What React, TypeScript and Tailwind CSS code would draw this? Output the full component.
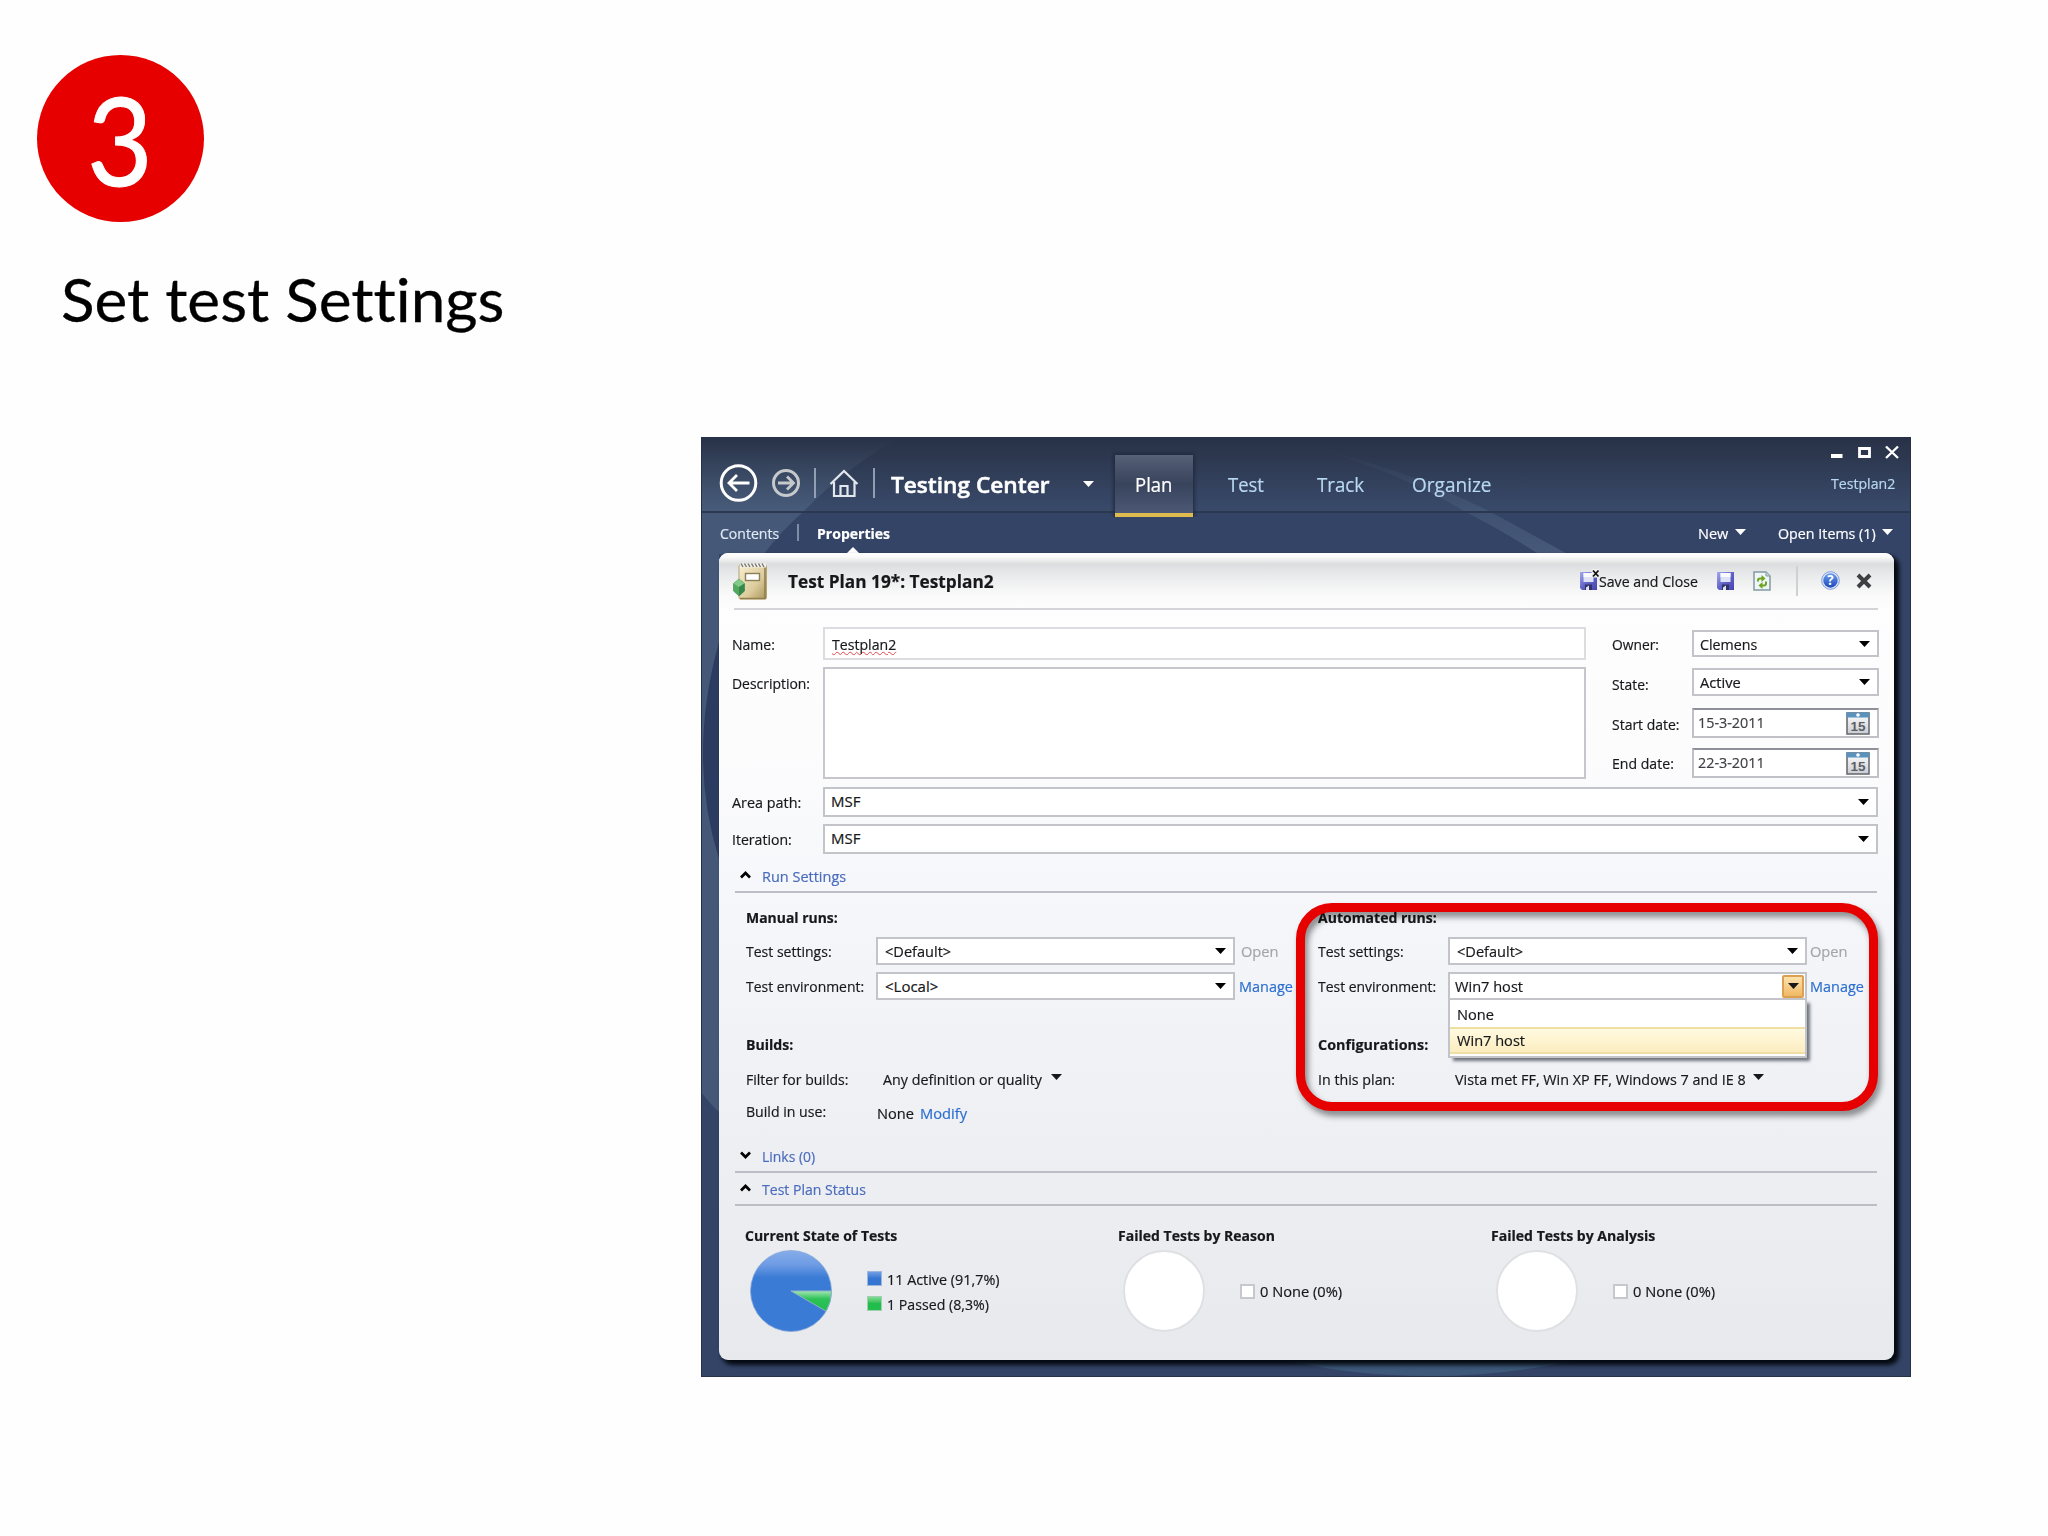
import React, { useLayoutEffect, useRef, useState } from "react";

type Box = { className?: string; children?: React.ReactNode };

/* A single line of text condensed or widened to fill the width of its box. */
function T({ className = "", children }: Box) {
  const box = useRef<HTMLSpanElement>(null);
  const inner = useRef<HTMLSpanElement>(null);
  const [scale, setScale] = useState(1);
  useLayoutEffect(() => {
    if (box.current && inner.current && inner.current.offsetWidth > 0) {
      setScale(box.current.getBoundingClientRect().width / inner.current.offsetWidth);
    }
  }, []);
  return (
    <span ref={box} className={`block shrink-0 whitespace-nowrap ${className}`}>
      <span ref={inner} className="inline-block origin-left" style={{ transform: `scaleX(${scale})` }}>
        {children}
      </span>
    </span>
  );
}

function Caret({ className = "" }: { className?: string }) {
  return (
    <svg viewBox="0 0 11 6" className={`h-[6px] w-[11px] shrink-0 ${className}`}>
      <path d="M0 0H11L5.5 6Z" fill="currentColor" />
    </svg>
  );
}

function Select({ className = "", children }: Box) {
  return (
    <div className={`flex shrink-0 items-center justify-between border-2 border-[#c3c4c9] bg-white pr-[7px] ${className}`}>
      {children}
      <Caret className="text-black" />
    </div>
  );
}

function Calendar() {
  return (
    <svg viewBox="0 0 24 23" className="h-[23px] w-[24px]">
      <defs>
        <linearGradient id="calPage" x1="0" y1="0" x2="0" y2="1">
          <stop offset="0" stopColor="#ffffff" />
          <stop offset="1" stopColor="#c9ccd2" />
        </linearGradient>
      </defs>
      <rect x="1" y="1" width="22" height="21" fill="url(#calPage)" stroke="#6a6d74" strokeWidth="1.6" />
      <rect x="0.5" y="0.5" width="23" height="5" fill="#5b93bd" />
      <circle cx="12" cy="3" r="1.8" fill="#fff" />
      <text x="12" y="19" textAnchor="middle" fontSize="12.5" fontWeight="700" fontFamily="Liberation Sans, sans-serif" fill="#5c5f66" textLength="15" lengthAdjust="spacingAndGlyphs">15</text>
    </svg>
  );
}

function DateBox({ className = "", children }: Box) {
  return (
    <div className={`flex h-[30px] w-[187px] items-center justify-between border-2 border-[#bfc1c7] border-t-[#8e9197] bg-white pl-[4px] pr-[7px] text-[#3f4045] ${className}`}>
      {children}
      <Calendar />
    </div>
  );
}

function Chevron({ down = false }: { down?: boolean }) {
  return (
    <svg viewBox="0 0 11 8" className="mb-[2px] h-[8px] w-[11px] shrink-0">
      <path d={down ? "M1 1.5L5.5 6L10 1.5" : "M1 6.5L5.5 2L10 6.5"} fill="none" stroke="#000" strokeWidth="2.7" />
    </svg>
  );
}

function Floppy({ close = false }: { close?: boolean }) {
  return (
    <svg viewBox="0 0 20 21" className="h-[21px] w-[20px] shrink-0 overflow-visible">
      <defs>
        <linearGradient id="floppy" x1="0" y1="0" x2="1" y2="1">
          <stop offset="0" stopColor="#a6a9ec" />
          <stop offset="0.5" stopColor="#6163c8" />
          <stop offset="1" stopColor="#4644ae" />
        </linearGradient>
      </defs>
      <path d="M1 2H18V20H3L1 18Z" fill="url(#floppy)" />
      <path d="M4.500 3H14.500V12H4.500Z" fill="#dde2f7" />
      <path d="M4.500 3H14.500V7H4.500Z" fill="#fafbff" />
      <path d="M6 14.500H13V20H6Z" fill="#303268" />
      <path d="M7 20V17.500L10 15.500V20Z" fill="#dfe3f3" />
      {close && (
        <>
          <rect x="12.500" y="-1" width="8" height="8.500" fill="#f0f0f2" />
          <path d="M14 0.500L19.500 6.500M19.500 0.500L14 6.500" stroke="#111" strokeWidth="1.800" />
        </>
      )}
    </svg>
  );
}

function PlanIcon() {
  return (
    <svg viewBox="0 0 35 38" className="h-[38px] w-[35px] shrink-0">
      <defs>
        <linearGradient id="pad" x1="0" y1="0" x2="1" y2="1">
          <stop offset="0" stopColor="#f8f0d2" />
          <stop offset="0.6" stopColor="#dccc9c" />
          <stop offset="1" stopColor="#a8935a" />
        </linearGradient>
      </defs>
      <rect x="6" y="3" width="27.5" height="34" rx="1.5" fill="url(#pad)" stroke="#b5a474" strokeWidth="1" />
      <path d="M32 4V36.500H7" fill="none" stroke="#92804c" strokeWidth="1.600" />
      <path d="M7 3.500H33" stroke="#f4f2ea" strokeWidth="4" />
      <path d="M8 1.500L10 5M11.500 1.500L13.500 5M15 1.500L17 5M18.500 1.500L20.500 5M22 1.500L24 5M25.500 1.500L27.500 5M29 1.500L31 5" stroke="#7b7a76" strokeWidth="1.500" />
      <rect x="12.500" y="11.500" width="14" height="7" fill="#fff" stroke="#8b7f58" strokeWidth="1.400" />
      <path d="M6 17L11.500 21.500V29L6 34L0.500 29V21.500Z" fill="#52a85f" stroke="#3d8a4b" strokeWidth="0.600" />
      <path d="M6 17L11.500 21.500L6 25L0.500 21.500Z" fill="#83c98a" />
      <path d="M6 25L11.500 21.500V29L6 34Z" fill="#35884a" />
    </svg>
  );
}

function WindowBackdrop() {
  return (
    <svg viewBox="0 0 1209 940" preserveAspectRatio="none" className="absolute -left-px top-0 h-full w-[1210px]">
      <defs>
        <linearGradient id="nav" x1="0" y1="0" x2="0" y2="1">
          <stop offset="0" stopColor="#283146" />
          <stop offset="0.5" stopColor="#313e58" />
          <stop offset="1" stopColor="#394a6b" />
        </linearGradient>
        <linearGradient id="glow" x1="0" y1="0" x2="0" y2="1">
          <stop offset="0" stopColor="#6a87a0" stopOpacity="0" />
          <stop offset="1" stopColor="#6a87a0" stopOpacity="0.3" />
        </linearGradient>
        <linearGradient id="beam" x1="0" y1="0" x2="0" y2="1">
          <stop offset="0" stopColor="#7890a8" stopOpacity="0" />
          <stop offset="1" stopColor="#7890a8" stopOpacity="0.28" />
        </linearGradient>
      </defs>
      <rect width="1209" height="940" fill="#344467" />
      <rect width="1209" height="75" fill="url(#nav)" />
      <path d="M0 0H200Q145 30 102 75H0Z" fill="url(#glow)" />
      <path d="M0 75H102Q80 94 63 117H18V940H0Z" fill="#5d7590" fillOpacity="0.42" />
      <path d="M18 205Q-14 320 18 422Z" fill="#2c3b60" />
      <path d="M0 655Q10 668 18 675V940H0Z" fill="#344467" />
      <path d="M609 10Q700 30 789 75L866 117H837Q798 92 764 75Q700 36 609 10Z" fill="url(#beam)" />
      <path d="M590 924H870Q800 939 730 939Q650 939 590 924Z" fill="#4a7090" fillOpacity="0.45" />
      <path d="M1191 440Q1206 500 1191 560Z" fill="#5a6b94" fillOpacity="0.4" />
      <path d="M0 75H1209" stroke="#2b3850" strokeWidth="2" />
      <rect x="0.5" y="0.5" width="1208" height="939" fill="none" stroke="#27324a" />
    </svg>
  );
}

function NavBar() {
  return (
    <div className="relative flex h-[75px] text-[19.500px] leading-[28px] text-[#b9d8f2]">
      <svg viewBox="0 0 172 40" fill="none" className="ml-[16px] mt-[26px] h-[40px] w-[172px] shrink-0 overflow-visible">
        <circle cx="20.500" cy="20" r="17.300" stroke="#fff" strokeWidth="3" />
        <path d="M31.500 20H11M19 12L11 20L19 28" stroke="#fff" strokeWidth="2.800" />
        <circle cx="68" cy="20" r="12.500" stroke="#c6c9cc" strokeWidth="3" />
        <path d="M60 20H75M69 13.500L75.500 20L69 26.500" stroke="#c6c9cc" strokeWidth="2.800" />
        <path d="M97 5V35M156 5V35" stroke="#a9b4c6" strokeWidth="1.600" />
        <path d="M112.500 21L126 8L139.500 21M116 19V33H136.500V19M122.500 32V23H129.500V32" stroke="#e3e7ee" strokeWidth="2.200" />
      </svg>
      <T className="ml-[1px] mt-[34px] w-[159px] text-[21.500px] font-semibold text-white [&>span]:[-webkit-text-stroke:0.500px_white]">Testing Center</T>
      <Caret className="ml-[33px] mt-[44px] text-white" />
      <div className="ml-[21px] mt-[18px] h-[62px] w-[78px] shrink-0 border-b-[4px] border-[#dfbc4d] bg-gradient-to-b from-[#566077] via-[#38435c] to-[#4c5875] shadow-[0_0_4px_1px_#1d2536] [clip-path:inset(-5px_-5px_0_-5px)]">
        <T className="ml-[20px] mt-[16px] w-[37px] text-white">Plan</T>
      </div>
      <T className="ml-[35px] mt-[34px] w-[36px]">Test</T>
      <T className="ml-[53px] mt-[34px] w-[47px]">Track</T>
      <T className="ml-[48px] mt-[34px] w-[80px]">Organize</T>
      <div className="ml-auto mr-[12px] flex flex-col items-end">
        <svg viewBox="0 0 68 14" fill="none" stroke="#fff" className="mt-[8px] h-[14px] w-[68px]">
          <path d="M0 11H11.500" strokeWidth="4" />
          <path d="M28.500 3.500H38.500V11.500H28.500Z" strokeWidth="2.800" />
          <path d="M55 1.500L67 13M67 1.500L55 13" strokeWidth="2.400" />
        </svg>
        <T className="mr-[4px] mt-[14px] w-[64px] text-[15px] leading-[20px]">Testplan2</T>
      </div>
    </div>
  );
}

function SubNav() {
  return (
    <div className="relative flex h-[41px] pt-[11px] leading-[20px] text-white">
      <T className="ml-[18px] w-[59px] text-[#dfe9f5]">Contents</T>
      <div className="ml-[18px] mt-[1px] h-[17px] w-[2px] bg-[#7e8ba6]" />
      <div className="relative ml-[18px]">
        <T className="w-[73px] font-bold">Properties</T>
        <svg viewBox="0 0 14 7" className="absolute left-[29px] top-[24px] h-[7px] w-[14px]">
          <path d="M7 0L14 7H0Z" fill="#fff" />
        </svg>
      </div>
      <T className="ml-auto w-[30px]">New</T>
      <Caret className="ml-[7px] mt-[6px]" />
      <T className="ml-[32px] w-[98px]">Open Items (1)</T>
      <Caret className="ml-[6px] mr-[18px] mt-[6px]" />
    </div>
  );
}

function PanelHeader() {
  return (
    <div className="flex h-[55px] items-center rounded-t-[9px] bg-[linear-gradient(180deg,#fff_0px,#fafafa_4px,#dcddde_11px,#e9eaeb_22px,#fafafa_42px,#fdfdfd_55px)] pl-[14px] pr-[22px]">
      <PlanIcon />
      <T className="ml-[20px] mt-px w-[206px] text-[18px] font-bold">Test Plan 19*: Testplan2</T>
      <div className="ml-auto flex items-center">
        <Floppy close />
        <T className="mt-px w-[99px]">Save and Close</T>
        <div className="ml-[18px] flex"><Floppy /></div>
        <svg viewBox="0 0 18 20" className="ml-[17px] h-[20px] w-[18px]">
          <path d="M1 1H13L17 5V19H1Z" fill="#eef6f8" stroke="#8499a3" strokeWidth="1.500" />
          <path d="M13 1V5H17" fill="#c6d4da" stroke="#8499a3" />
          <path d="M5 10.500V9Q5 7.500 7 7.500H9.500" fill="none" stroke="#6ea41f" strokeWidth="2" />
          <path d="M8.500 4L12.500 7.500L8.500 11Z" fill="#6ea41f" />
          <path d="M13 10.500V12Q13 14.500 11 14.500H8.500" fill="none" stroke="#6ea41f" strokeWidth="2" />
          <path d="M9.500 11L5.500 14.500L9.500 18Z" fill="#6ea41f" />
        </svg>
        <div className="ml-[25px] h-[30px] w-[2px] bg-[#cfd0d2]" />
        <svg viewBox="0 0 20 20" className="ml-[23px] h-[19px] w-[19px]">
          <defs>
            <linearGradient id="help" x1="0" y1="0" x2="0" y2="1">
              <stop offset="0" stopColor="#6d9df0" />
              <stop offset="1" stopColor="#1d48b8" />
            </linearGradient>
          </defs>
          <circle cx="10" cy="10" r="9.300" fill="#dce6f7" stroke="#7d9bd8" strokeWidth="1" />
          <circle cx="10" cy="10" r="7.600" fill="url(#help)" />
          <text x="10" y="15" textAnchor="middle" fontSize="14" fontWeight="700" fontFamily="Open Sans, sans-serif" fill="#fff">?</text>
        </svg>
        <svg viewBox="0 0 16 16" className="ml-[16px] h-[16px] w-[16px]">
          <path d="M2 2L14 14M14 2L2 14" stroke="#3d3f42" strokeWidth="4" />
        </svg>
      </div>
    </div>
  );
}

function Section({ className = "", down, children }: Box & { down?: boolean }) {
  return (
    <div className={`ml-[16px] mr-[17px] flex items-center border-b-2 border-[#bcbec6] pl-[5px] text-[#4a6cbd] ${className}`}>
      <Chevron down={down} />
      <div className="ml-[11px]">{children}</div>
    </div>
  );
}

function Form() {
  return (
    <div className="pl-[13px]">
      <div className="flex">
        <div className="mt-[17px]">
          <div className="flex items-center">
            <T className="w-[43px]">Name:</T>
            <div className="ml-[48px] flex h-[33px] w-[763px] items-center border-2 border-[#dcdde0] bg-white pl-[7px]">
              <T className="w-[64px] [&>span]:underline [&>span]:decoration-[#e2484d] [&>span]:decoration-wavy [&>span]:decoration-1 [&>span]:underline-offset-[1px] [&>span]:[text-decoration-skip-ink:none]">Testplan2</T>
            </div>
          </div>
          <div className="mt-[7px] flex">
            <T className="mt-[6px] w-[78px]">Description:</T>
            <div className="ml-[13px] h-[112px] w-[763px] border-2 border-[#c6c7cc] bg-white" />
          </div>
        </div>
        <div className="ml-[26px] mt-[20px]">
          <div className="flex items-center">
            <T className="w-[47px]">Owner:</T>
            <Select className="ml-[33px] h-[27px] w-[187px] pl-[6px]"><T className="w-[57px]">Clemens</T></Select>
          </div>
          <div className="mt-[11px] flex items-center">
            <T className="mt-[3px] w-[37px]">State:</T>
            <Select className="ml-[43px] h-[28px] w-[187px] pl-[6px]"><T className="w-[41px]">Active</T></Select>
          </div>
          <div className="mt-[12px] flex items-center">
            <T className="mt-px w-[68px]">Start date:</T>
            <DateBox className="ml-[12px]"><T className="mb-[2px] w-[67px]">15-3-2011</T></DateBox>
          </div>
          <div className="mt-[10px] flex items-center">
            <T className="w-[62px]">End date:</T>
            <DateBox className="ml-[18px]"><T className="mb-[2px] w-[67px]">22-3-2011</T></DateBox>
          </div>
        </div>
      </div>
      <div className="mt-[8px] flex items-center">
        <T className="w-[69px]">Area path:</T>
        <Select className="ml-[22px] h-[30px] w-[1055px] pl-[6px]"><T className="mb-[3px] w-[29px]">MSF</T></Select>
      </div>
      <div className="mt-[7px] flex items-center">
        <T className="w-[60px]">Iteration:</T>
        <Select className="ml-[31px] h-[30px] w-[1055px] pl-[6px]"><T className="mb-[2px] w-[29px]">MSF</T></Select>
      </div>
    </div>
  );
}

function ManualRuns() {
  return (
    <div className="w-[572px]">
      <T className="w-[92px] font-bold">Manual runs:</T>
      <div className="mt-[10px] flex h-[28px] items-center">
        <T className="w-[86px]">Test settings:</T>
        <Select className="ml-[44px] h-[28px] w-[359px] pl-[7px]"><T className="w-[66px]">&lt;Default&gt;</T></Select>
        <T className="ml-[6px] w-[37px] text-[#a4a5a9]">Open</T>
      </div>
      <div className="mt-[7px] flex h-[28px] items-center">
        <T className="w-[118px]">Test environment:</T>
        <Select className="ml-[12px] h-[28px] w-[359px] pl-[7px]"><T className="w-[53px]">&lt;Local&gt;</T></Select>
        <T className="ml-[4px] w-[54px] text-[#2d6fd0]">Manage</T>
      </div>
      <T className="mt-[34px] w-[47px] font-bold">Builds:</T>
      <div className="mt-[15px] flex">
        <T className="w-[102px]">Filter for builds:</T>
        <T className="ml-[35px] w-[159px]">Any definition or quality</T>
        <Caret className="ml-[9px] mt-[5px]" />
      </div>
      <div className="mt-[12px] flex">
        <T className="w-[80px]">Build in use:</T>
        <T className="ml-[51px] mt-[2px] w-[37px]">None</T>
        <T className="ml-[6px] mt-[2px] w-[47px] text-[#2d6fd0]">Modify</T>
      </div>
    </div>
  );
}

function AutomatedRuns() {
  return (
    <div className="relative">
      <T className="w-[119px] font-bold">Automated runs:</T>
      <div className="mt-[10px] flex h-[28px] items-center">
        <T className="w-[86px]">Test settings:</T>
        <Select className="ml-[44px] h-[28px] w-[359px] pl-[7px]"><T className="w-[66px]">&lt;Default&gt;</T></Select>
        <T className="ml-[3px] w-[37px] text-[#a4a5a9]">Open</T>
      </div>
      <div className="mt-[7px] flex h-[28px] items-center">
        <T className="w-[118px]">Test environment:</T>
        <div className="relative ml-[12px] flex h-[28px] w-[359px] items-center justify-between border-2 border-[#c3c4c9] bg-white pl-[5px] pr-px">
          <T className="w-[68px]">Win7 host</T>
          <div className="flex h-[23px] w-[22px] items-center justify-center rounded-[2px] border-2 border-[#dca052] bg-gradient-to-b from-[#fbe3ae] to-[#f0b862]">
            <Caret />
          </div>
          <div className="absolute left-[-2px] top-[24px] z-10 w-[359px] border-2 border-[#c3c4c9] bg-white shadow-[4px_4px_3px_-1px_rgba(70,75,85,0.75)]">
            <T className="ml-[7px] mt-[4px] w-[37px]">None</T>
            <div className="mb-[2px] mt-[3px] h-[27px] border-y-2 border-[#f0dfa4] bg-gradient-to-b from-[#fffae0] to-[#fcedc0] pt-[1px]">
              <T className="ml-[7px] w-[68px]">Win7 host</T>
            </div>
          </div>
        </div>
        <T className="ml-[3px] w-[54px] text-[#2d6fd0]">Manage</T>
      </div>
      <T className="mt-[34px] w-[110px] font-bold">Configurations:</T>
      <div className="mt-[15px] flex">
        <T className="w-[77px]">In this plan:</T>
        <T className="ml-[60px] w-[291px]">Vista met FF, Win XP FF, Windows 7 and IE 8</T>
        <Caret className="ml-[7px] mt-[5px]" />
      </div>
      <div className="absolute left-[-22px] top-[-4px] z-20 h-[208px] w-[582px] rounded-[36px] border-[9px] border-[#e60000] drop-shadow-[3px_5px_3px_rgba(0,0,0,0.45)]" />
    </div>
  );
}

function EmptyChart({ title, className = "" }: { title: string; className?: string }) {
  return (
    <div className="w-[373px]">
      <T className={`font-bold ${className}`}>{title}</T>
      <div className="ml-[5px] mt-[5px] flex items-center">
        <div className="h-[82px] w-[82px] rounded-full border-2 border-[#dfe0e3] bg-white" />
        <div className="ml-[35px] h-[15px] w-[15px] border-2 border-[#c6c8cd] bg-white" />
        <T className="ml-[5px] w-[82px]">0 None (0%)</T>
      </div>
    </div>
  );
}

function Status() {
  return (
    <div className="ml-[26px] mt-[19px] flex">
      <div className="w-[373px]">
        <T className="w-[152px] font-bold">Current State of Tests</T>
        <div className="ml-[5px] mt-[5px] flex items-center">
          <svg viewBox="0 0 82 82" className="h-[82px] w-[82px]">
            <defs>
              <linearGradient id="active" x1="0" y1="0" x2="0" y2="1">
                <stop offset="0" stopColor="#86adea" />
                <stop offset="0.180" stopColor="#6d9be4" />
                <stop offset="0.340" stopColor="#3a7bd5" />
                <stop offset="1" stopColor="#3a7bd5" />
              </linearGradient>
              <linearGradient id="passed" x1="0" y1="0" x2="0" y2="1">
                <stop offset="0" stopColor="#a3e6b0" />
                <stop offset="0.400" stopColor="#2cc257" />
                <stop offset="1" stopColor="#22bd4d" />
              </linearGradient>
            </defs>
            <circle cx="41" cy="41" r="40.500" fill="url(#active)" stroke="#8ba9d8" strokeWidth="0.800" />
            <path d="M41 41H81.500A40.500 40.500 0 0 1 76.100 61.250Z" fill="url(#passed)" stroke="#8fb0c8" strokeWidth="1" />
          </svg>
          <div className="ml-[35px] flex flex-col gap-[5px]">
            <div className="flex items-center">
              <div className="h-[15px] w-[15px] border border-[#9eb6dc] bg-gradient-to-b from-[#709ee4] to-[#3576d2] to-50%" />
              <T className="ml-[5px] w-[113px]">11 Active (91,7%)</T>
            </div>
            <div className="flex items-center">
              <div className="h-[15px] w-[15px] border border-[#9fcfae] bg-gradient-to-b from-[#7fdc95] to-[#22bd4d] to-50%" />
              <T className="ml-[5px] w-[102px]">1 Passed (8,3%)</T>
            </div>
          </div>
        </div>
      </div>
      <EmptyChart title="Failed Tests by Reason" className="w-[157px]" />
      <EmptyChart title="Failed Tests by Analysis" className="w-[164px]" />
    </div>
  );
}

export default function App() {
  return (
    <main className="h-[1536px] w-[2048px] overflow-hidden bg-[#fefefe] text-black">
      <div className="h-[437px] pl-[37px] pt-[55px] font-['Lato',sans-serif] [font-variant-ligatures:none]">
        <div className="flex h-[167px] w-[167px] items-center justify-center rounded-full bg-[#e60000] text-[122px] leading-none text-white">
          <T className="mr-[2px] w-[66px] [&>span]:[-webkit-text-stroke:1px_white]">3</T>
        </div>
        <T className="ml-[24px] mt-[41px] w-[444px] text-[60px] leading-[72px] [&>span]:[-webkit-text-stroke:0.300px_black]">Set test Settings</T>
      </div>
      <div className="relative ml-[702px] h-[940px] w-[1209px] font-['Open_Sans',sans-serif] text-[15px] leading-[20px] [-webkit-text-stroke:0.200px_currentColor]">
        <WindowBackdrop />
        <NavBar />
        <SubNav />
        <div className="relative ml-[17px] h-[807px] w-[1175px] rounded-[9px] bg-[linear-gradient(180deg,#fefefe_0%,#fcfcfd_25%,#f5f6fa_45%,#eef0f4_70%,#e8e9ed_100%)] text-[#17181b] shadow-[4px_4px_4px_1px_#060b12]">
          <PanelHeader />
          <div className="ml-[15px] mr-[16px] h-[2px] bg-[#d3d4d8]" />
          <Form />
          <Section className="mt-[8px] h-[31px] pb-px"><T className="w-[84px]">Run Settings</T></Section>
          <div className="ml-[27px] mt-[14px] flex h-[237px]">
            <ManualRuns />
            <AutomatedRuns />
          </div>
          <Section down className="h-[29px] pb-[3px]"><T className="w-[53px]">Links (0)</T></Section>
          <Section className="h-[33px]"><T className="w-[104px]">Test Plan Status</T></Section>
          <Status />
        </div>
      </div>
    </main>
  );
}
